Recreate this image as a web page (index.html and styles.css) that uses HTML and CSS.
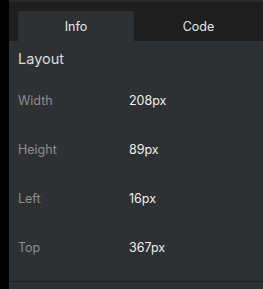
FILE: index.html
```html
<!DOCTYPE html>
<html lang="en">
<head>
  <meta charset="UTF-8" />
  <title>Inspector</title>
  <link rel="stylesheet" href="styles.css">
</head>
<body>
  <div class="inspector">
    <div class="tabs">
      <div class="tab active">Info</div>
      <div class="tab">Code</div>
    </div>

    <div class="panel">
      <h2 class="panel-title">Layout</h2>
      <div class="prop-row">
        <span class="prop-label">Width</span>
        <span class="prop-value">208px</span>
      </div>
      <div class="prop-row">
        <span class="prop-label">Height</span>
        <span class="prop-value">89px</span>
      </div>
      <div class="prop-row">
        <span class="prop-label">Left</span>
        <span class="prop-value">16px</span>
      </div>
      <div class="prop-row">
        <span class="prop-label">Top</span>
        <span class="prop-value">367px</span>
      </div>
    </div>
    <div class="panel-next"></div>
  </div>
</body>
</html>
```

FILE: styles.css
```css
* {
  box-sizing: border-box;
  margin: 0;
  padding: 0;
}

body {
  background: #000;
  font-family: 'Inter', 'Open Sans', sans-serif;
  height: 100vh;
  overflow: hidden;
}

.inspector {
  margin-left: 9px;
  height: 100%;
  display: flex;
  flex-direction: column;
  background: #2e3134;
}

.tabs {
  display: flex;
  height: 41px;
  padding: 9px 0 0 9px;
  background: #1e1e1e;
  border-top: 2px solid #2a2a2a;
}

.tab {
  flex: 1;
  display: flex;
  align-items: center;
  justify-content: center;
  font-size: 12.5px;
  color: #e6e6e6;
  border-radius: 3px 3px 0 0;
}

.tab.active {
  flex: 0 0 116px;
  background: #2e3134;
}

.panel {
  padding: 8px 9px 9px;
  border-bottom: 1px solid #1f2123;
}

.panel-title {
  font-size: 14.5px;
  font-weight: 400;
  line-height: 20px;
  color: #dcdcdc;
  margin-bottom: 7px;
}

.prop-row {
  display: flex;
  align-items: center;
  height: 49px;
}

.prop-label {
  width: 111px;
  font-size: 12.5px;
  color: #8c8f92;
}

.prop-value {
  font-size: 12.5px;
  color: #f0f0f0;
}

.panel-next {
  flex: 1;
}
```
